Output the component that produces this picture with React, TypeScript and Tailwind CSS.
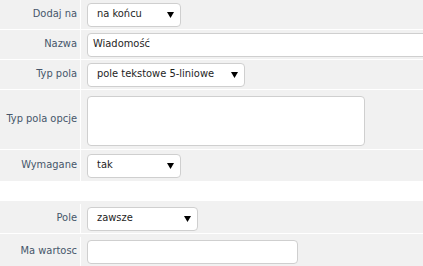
import React from 'react';

const Arrow = () => (
  <svg width="7" height="6" viewBox="0 0 7 6" className="shrink-0">
    <path d="M0 0 H7 L3.5 6 Z" fill="#000" />
  </svg>
);

const Select = ({ value, width }: { value: string; width: string }) => (
  <div className={`${width} h-[24px] flex items-center justify-between bg-white border border-[#cfcfcf] rounded-[4px] pl-[9px] pr-[6px] text-[#1e1e1e]`}>
    <span>{value}</span>
    <Arrow />
  </div>
);

const Row = ({ label, h, children }: { label: string; h: string; children: React.ReactNode }) => (
  <div className={`flex ${h} bg-[#f1f1f1] border-b border-white`}>
    <div className="w-[81px] shrink-0 border-r border-white flex items-center justify-end pr-[3px] text-[#46566a]">
      {label}
    </div>
    <div className="flex-1 flex items-center pl-[6px]">{children}</div>
  </div>
);

const App = () => {
  return (
    <div className="w-[423px] h-[266px] overflow-hidden bg-white text-[11px] font-['DejaVu_Sans_Condensed','Liberation_Sans',sans-serif]">
      <Row label="Dodaj na" h="h-[30px]">
        <Select value="na końcu" width="w-[94px]" />
      </Row>
      <Row label="Nazwa" h="h-[30px]">
        <div className="w-[400px] shrink-0 h-[24px] flex items-center bg-white border border-[#cfcfcf] rounded-[4px] pl-[5px] text-[#1e1e1e]">
          Wiadomość
        </div>
      </Row>
      <Row label="Typ pola" h="h-[30px]">
        <Select value="pole tekstowe 5-liniowe" width="w-[158px]" />
      </Row>
      <Row label="Typ pola opcje" h="h-[60px]">
        <div className="w-[278px] h-[50px] mt-[3px] bg-white border border-[#cfcfcf] rounded-[4px]" />
      </Row>
      <div className="flex h-[31px] bg-[#f1f1f1]">
        <div className="w-[81px] shrink-0 border-r border-white flex items-center justify-end pr-[3px] text-[#46566a]">
          Wymagane
        </div>
        <div className="flex-1 flex items-center pl-[6px]">
          <Select value="tak" width="w-[94px]" />
        </div>
      </div>
      <div className="h-[20px] bg-white" />
      <Row label="Pole" h="h-[33px] pt-[3px]">
        <Select value="zawsze" width="w-[111px]" />
      </Row>
      <Row label="Ma wartosc" h="h-[33px] pt-[3px]">
        <div className="w-[211px] h-[24px] bg-white border border-[#cfcfcf] rounded-[4px]" />
      </Row>
    </div>
  );
};

export default App;
